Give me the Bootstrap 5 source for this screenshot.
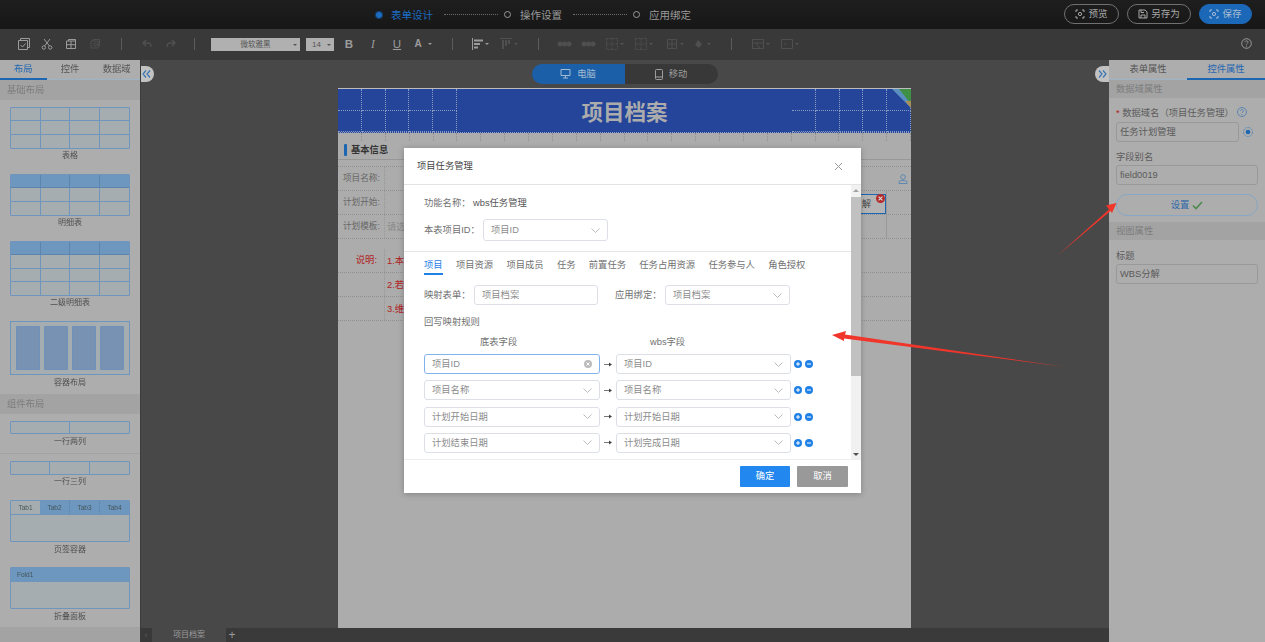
<!DOCTYPE html>
<html lang="zh-CN">
<head>
<meta charset="UTF-8">
<title>项目档案 - 表单设计</title>
<link href="https://cdn.jsdelivr.net/npm/bootstrap@5.3.0/dist/css/bootstrap.min.css" rel="stylesheet">
<style>
html, body { margin: 0; height: 100%; background: #484848; }
body { font-family: "Liberation Sans", "Noto Sans CJK SC", sans-serif; font-size: 9.3px; line-height: 14px; }
.stage { width: 1265px; height: 642px; overflow: hidden; position: relative; display: flex; flex-direction: column; filter: blur(.45px); }

/* top steps */
.topbar { height: 29px; flex: none; background: linear-gradient(#1e1e1e, #171717); color: #9a9a9a; font-size: 10.5px; position: relative; }
.step-wrap { position: absolute; left: 374px; top: 0; height: 29px; display: flex; align-items: center; }
.step-dot { width: 7px; height: 7px; border: 1px solid #9a9a9a; border-radius: 50%; }
.step-now { background: #1d6cc0; border-color: #1d6cc0; box-shadow: 0 0 0 1px #123f70; width: 6px; height: 6px; margin-left: 2px; }
.step-txt { margin-left: 9px; width: 42px; white-space: nowrap; }
.step-now + .step-txt { color: #1d6cc0; margin-left: 9px; }
.step-line { width: 54px; border-top: 1px dotted #6b6b6b; margin: 0 6px 0 11px; }
.top-btns { position: absolute; right: 13px; top: 4px; display: flex; gap: 8px; }
.tbtn { height: 20px; padding: 0; font-size: 9.5px; line-height: 18px; color: #a8a8a8; border: 1px solid #707070; background: transparent; display: flex; align-items: center; justify-content: center; gap: 3px; }
.tbtn-blue { background: #1c68b8; border-color: #1c68b8; color: #a9bcd0; }

/* toolbar */
.toolrow { height: 31px; flex: none; background: #393939; position: relative; }
.tic { position: absolute; top: 9px; width: 12px; height: 12px; display: block; }
.tsep { position: absolute; top: 9px; width: 1px; height: 12px; background: #5c5c5c; }
.fsel { position: absolute; top: 9px; height: 13px; background: #b0b0b0; color: #555; font-size: 7.5px; line-height: 13px; text-align: center; }
.fsel::after { content: ""; position: absolute; right: 3px; top: 6px; border: 2px solid transparent; border-top-color: #555; }
.tltr { position: absolute; top: 8px; color: #9c9c9c; font-size: 11.5px; line-height: 14px; width: 12px; text-align: center; }
.caret-s { position: absolute; top: 14px; border: 2px solid transparent; border-top-color: #9c9c9c; }
.caret-d { border-top-color: #555; }

.mainrow { flex: 1; display: flex; min-height: 0; }

/* left palette */
.palette { width: 140px; flex: none; background: #adadad; box-shadow: 1px 0 0 #3c3c3c; position: relative; z-index: 1; display: flex; flex-direction: column; color: #5a5a5a; }
.ptabs { height: 20px; display: flex; flex: none; border-bottom: 1px solid #9db3c9; color: #555; }
.ptabs div { flex: 1; text-align: center; line-height: 18px; }
.ptabs .on { color: #1d66b2; border-bottom: 2px solid #1d66b2; height: 20px; }
.psec { height: 20px; background: #a3a3a3; color: #7c7c7c; padding-left: 7px; line-height: 20px; flex: none; }
.lay-item { padding: 0 10px 11px; }
.lay-name { font-size: 8px; line-height: 14px; text-align: center; color: #4f4f4f; margin-top: 1px; }
.thumb { border: 1px solid #6f95bd; border-radius: 1px; background: #a6adb0; display: grid; overflow: hidden; }
.thumb > div { border-right: 1px solid #6f95bd; border-bottom: 1px solid #6f95bd; min-width: 0; }
.thumb .hd { background: #6e97c0; border-right-color: #5d84ac; border-bottom-color: #5d84ac; }
.thumb .col-end { border-right: 0; }
.thumb .row-end { border-bottom: 0; }
.box-thumb { height: 54px; border: 1px solid #6f95bd; background: #a6adb0; display: flex; gap: 4px; padding: 4px 5px; }
.box-thumb div { flex: 1; background: #7892b3; border: 1px solid #7090b8; border-radius: 1px; }
.tab-thumb { height: 42px; border: 1px solid #6f95bd; border-radius: 1px; background: #a6adb0; }
.tab-head { display: flex; height: 14px; background: #6e97c0; border-bottom: 1px solid #6f95bd; font-size: 6.5px; line-height: 13px; color: #455; text-align: center; }
.tab-head div { flex: 1; border-right: 1px dotted #5e7fa2; }
.tab-head .sel { background: #a6adb0; border-right: 0; }
.tab-head .fold { text-align: left; padding-left: 6px; border: 0; }
.p-foot { flex: 1; background: #a3a3a3; }
.p-rule { border-top: 1px solid #a3a3a3; padding-top: 7px; }

/* centre */
.canvas-col { flex: 1; min-width: 0; position: relative; display: flex; flex-direction: column; background: #484848; }
.canvas-area { flex: 1; min-height: 0; display: flex; flex-direction: column; align-items: center; }
.device { margin-top: 4px; height: 20px; width: 186px; display: flex; border-radius: 10px; overflow: hidden; flex: none; color: #9e9e9e; }
.device div { flex: 1; display: flex; align-items: center; justify-content: center; gap: 6px; background: #383838; }
.device .on { background: #1a5fa8; color: #a5bbd2; }
.sheet { margin-top: 4px; width: 573px; flex: 1; background: #acacac; border-top: 1px solid #bcbcbc; position: relative; color: #666; }
.band { height: 44px; background: #24459a; display: flex; border-bottom: 1px dotted #8a9bc4; }
.band-grid { width: 119px; display: grid; grid-template-columns: repeat(5, 1fr); grid-template-rows: 1fr 1fr; flex: none; }
.band-grid div { border-right: 1px dotted #8a9bc4; border-bottom: 1px dotted #8a9bc4; }
.band-title { flex: 1; text-align: center; color: #acacac; font-size: 21.5px; font-weight: 700; line-height: 48px; }
.corner { position: absolute; right: 0; top: 0; display: block; }
.strip { height: 8px; display: grid; grid-template-columns: repeat(24, 1fr); }
.strip div { border-right: 1px dotted #8f8f8f; }
.info-row { height: 19px; display: flex; align-items: center; padding-left: 6px; gap: 4px; border-bottom: 1px solid #979797; font-weight: 700; color: #333; }
.info-bar { width: 3px; height: 12px; background: #1d66b2; border-radius: 1px; }
.gap-row { height: 7px; border-bottom: 1px dotted #8f8f8f; }
.s-row { height: 24px; border-bottom: 1px dotted #8f8f8f; display: flex; align-items: center; position: relative; }
.s-lab { width: 47px; padding-left: 5px; height: 100%; line-height: 23px; border-right: 1px dotted #979797; flex: none; font-size: 8.6px; }
.s-ph { padding-left: 2px; color: #888; }
.s-red { color: #b01f1f; }
.s-lab-red { text-align: right; padding-right: 7px; color: #b01f1f; font-size: 9.3px; }
.blue-inp { position: absolute; left: 400px; right: 25px; top: 3px; height: 20px; border: 1px solid #1d66b2; background: #b4b4b4; color: #444; line-height: 18px; text-align: right; padding-right: 14px; }
.red-x { position: absolute; right: 0; top: -1px; width: 9px; height: 9px; display: block; }
.person { position: absolute; right: 3px; top: 7px; display: block; }
.s-cellr { position: absolute; right: 24px; top: 0; bottom: 0; border-right: 1px solid #999; }
.tabbar { height: 14px; flex: none; background: #3a3a3a; display: flex; color: #9c9c9c; line-height: 14px; }
.tab-prev { width: 12px; background: #393939; text-align: center; color: #5c5c5c; }
.tab-cur { width: 74px; background: #484848; text-align: center; font-size: 8px; }
.tab-add { width: 12px; text-align: center; font-size: 12px; background: #393939; }

.handle { position: absolute; top: 66px; width: 14px; height: 16px; background: #c2c2c2; display: flex; align-items: center; justify-content: center; }
.handle-l { left: 140px; border-radius: 0 8px 8px 0; padding-right: 1px; }
.handle-r { left: 1095px; border-radius: 8px 0 0 8px; padding-left: 1px; }

/* right props */
.props { width: 156px; flex: none; background: #adadad; color: #5a5a5a; display: flex; flex-direction: column; position: relative; }
.props .ptabs div { line-height: 18px; }
.r-sec { height: 18px; background: #a3a3a3; color: #7c7c7c; line-height: 18px; padding-left: 7px; }
.r-lab { line-height: 14px; padding-left: 7px; color: #5c5c5c; }
.r-inp { height: 20px; margin-left: 7px; border: 1px solid #999; border-radius: 3px; padding: 0 3px; line-height: 18px; background: #adadad; color: #5a5a5a; }
.r-hint { width: 10px; height: 10px; display: inline-block; vertical-align: -1px; margin-left: 3px; }
.set-btn { height: 22px; margin: 9px 7px 6px; padding: 0; border: 1px solid #88a6c6; background: transparent; color: #2f6aa8; font-size: 9.3px; line-height: 20px; display: flex; align-items: center; justify-content: center; gap: 3px; }

/* dialog */
.dlg { position: absolute; left: 404px; top: 148px; width: 457px; height: 345px; border: 0; border-radius: 0; background: #fff; color: #666; display: flex; flex-direction: column; box-shadow: 0 1px 6px rgba(0,0,0,.25); }
.dlg-head { height: 37px; flex: none; padding: 0 18px 0 13px; border-bottom: 1px solid #e3e3e3; border-radius: 0; color: #444; display: flex; align-items: center; justify-content: space-between; }
.dlg-body { height: 274px; flex: none; padding: 0; display: flex; overflow: hidden; }
.dlg-main { flex: 1; min-width: 0; }
.dlg-pad { padding-left: 20px; }
.dlg-bar { width: 10px; flex: none; background: #f1f1f1; position: relative; }
.bar-thumb { position: absolute; left: 0; right: 0; top: 12px; height: 179px; background: #c1c1c1; }
.bar-up, .bar-dn { position: absolute; left: 2px; border: 3px solid transparent; }
.bar-up { top: 1px; border-bottom-color: #a3a3a3; }
.bar-dn { bottom: 0; border-top-color: #505050; }
.dlg-foot { height: 34px; flex: none; padding: 0 13px 0 0; border-top: 1px solid #eee; border-radius: 0; display: flex; align-items: center; justify-content: flex-end; gap: 7px; }
.dbtn { height: 21px; padding: 0; border: 0; border-radius: 1px; color: #fff; font-size: 9.3px; line-height: 21px; }
.dbtn-ok { background: #2287ee; width: 50px; }
.dbtn-no { background: #999; width: 51px; }
.d-row { display: flex; align-items: center; }
.d-lab { color: #707070; flex: none; white-space: nowrap; }
.fld { height: 20px; border: 1px solid #dcdfe6; border-radius: 3px; padding: 0 7px; color: #8c8c8c; display: flex; align-items: center; justify-content: space-between; white-space: nowrap; flex: none; }
.fld-on { border-color: #7fb5ec; }
.chev { display: block; flex: none; }
.dlg-rule { height: 1px; background: #e6e6e6; margin-top: 10px; }
.d-tabs { display: flex; margin-top: 6px; height: 17px; color: #707070; gap: 13.3px; }
.d-tabs div { line-height: 15px; height: 17px; }
.d-tabs .on { color: #1f80e6; border-bottom: 2px solid #1f80e6; }
.map-row { display: flex; align-items: center; height: 20px; margin-top: 6.33px; }
.map-arrow { width: 16px; flex: none; display: flex; justify-content: center; }
.map-tools { display: flex; gap: 3px; margin-left: 3px; }
.over-svg { position: absolute; left: 0; top: 0; pointer-events: none; }
</style>
</head>
<body>
<div class="stage">

  <div class="topbar">
    <div class="step-wrap">
      <div class="step-dot step-now"></div><div class="step-txt">表单设计</div><div class="step-line"></div>
      <div class="step-dot"></div><div class="step-txt">操作设置</div><div class="step-line"></div>
      <div class="step-dot"></div><div class="step-txt">应用绑定</div>
    </div>
    <div class="top-btns">
      <button class="btn tbtn rounded-pill" style="width:55px"><svg width="10" height="10" viewBox="0 0 10 10" fill="none" stroke="#a8a8a8"><path d="M1 3V1h2M7 1h2v2M9 7v2H7M3 9H1V7"/><circle cx="5" cy="5" r="1.6"/></svg>预览</button>
      <button class="btn tbtn rounded-pill" style="width:64px"><svg width="10" height="10" viewBox="0 0 10 10" fill="none" stroke="#a8a8a8"><path d="M1 1h6l2 2v6H1z"/><path d="M3 1v2.500h3M3 9V6h4v3"/></svg>另存为</button>
      <button class="btn tbtn tbtn-blue rounded-pill" style="width:53px"><svg width="10" height="10" viewBox="0 0 10 10" fill="none" stroke="#a9bcd0"><path d="M1 3V1h2M7 1h2v2M9 7v2H7M3 9H1V7"/><circle cx="5" cy="5" r="1.6"/></svg>保存</button>
    </div>
  </div>

  <div class="toolrow">
    <svg class="tic" style="left:18px" viewBox="0 0 12 12" fill="none" stroke="#9c9c9c"><path d="M.5 2.500h9v9h-9zM2.500 2.500v-2h9v9h-2"/><path d="M2.500 7l2 2 3-3.500"/></svg>
    <svg class="tic" style="left:41px" viewBox="0 0 12 12" fill="none" stroke="#9c9c9c"><path d="M3 1l5.500 7M9 1L3.500 8"/><circle cx="2.800" cy="9.500" r="1.700"/><circle cx="9.200" cy="9.500" r="1.700"/></svg>
    <svg class="tic" style="left:65px" viewBox="0 0 12 12" fill="none" stroke="#9c9c9c"><path d="M1.500 3h9v7.500h-9zM3.500 3V1.500h7V3M6 3v7.500M1.500 6.700h9"/></svg>
    <svg class="tic" style="left:89px" viewBox="0 0 12 12" fill="none" stroke="#4f4f4f"><path d="M2 3h7v7H2zM4 3V1.500h6.500V8H9"/><circle cx="6" cy="6.500" r="1.500"/></svg>
    <div class="tsep" style="left:121px"></div>
    <svg class="tic" style="left:141px" viewBox="0 0 12 12" fill="none" stroke="#4f4f4f" stroke-width="1.500"><path d="M5 2L2 5l3 3M2 5h5c2 0 3 1.500 3 4"/></svg>
    <svg class="tic" style="left:165px" viewBox="0 0 12 12" fill="none" stroke="#4f4f4f" stroke-width="1.500"><path d="M7 2l3 3-3 3M10 5H5C3 5 2 6.500 2 9"/></svg>
    <div class="tsep" style="left:194px"></div>
    <div class="fsel" style="left:211px;width:89px">微软雅黑</div>
    <div class="fsel" style="left:306px;width:28px;text-align:left;padding-left:6px;font-size:8px">14</div>
    <div class="tltr" style="left:343px;font-weight:700">B</div>
    <div class="tltr" style="left:367px;font-style:italic;font-family:'Liberation Serif',serif">I</div>
    <div class="tltr" style="left:391px;text-decoration:underline">U</div>
    <div class="tltr" style="left:412px;font-weight:700;font-size:10px">A</div>
    <div class="caret-s" style="left:428px"></div>
    <div class="tsep" style="left:452px"></div>
    <svg class="tic" style="left:472px" viewBox="0 0 12 12" fill="#9c9c9c"><path d="M0 0h1v12H0zM2 1.500h9v2H2zM2 5h6v2H2zM2 8.500h4v2H2z"/></svg>
    <div class="caret-s" style="left:485px"></div>
    <svg class="tic" style="left:500px" viewBox="0 0 12 12" fill="#4f4f4f"><path d="M0 0h12v1H0zM2 2h2v9H2zM5 2h2v6H5zM8 2h2v4H8z"/></svg>
    <div class="caret-s caret-d" style="left:514px"></div>
    <div class="tsep" style="left:538px"></div>
    <svg class="tic" style="left:557px;width:15px" viewBox="0 0 15 12" fill="#4f4f4f"><circle cx="3" cy="6" r="2.500"/><circle cx="7.500" cy="6" r="2.500"/><circle cx="12" cy="6" r="2.500"/></svg>
    <svg class="tic" style="left:581px;width:15px" viewBox="0 0 15 12" fill="#4f4f4f"><circle cx="3" cy="6" r="2.500"/><circle cx="7.500" cy="6" r="2.500"/><circle cx="12" cy="6" r="2.500"/></svg>
    <svg class="tic" style="left:606px" viewBox="0 0 12 12" fill="none" stroke="#4f4f4f" stroke-dasharray="2 1"><path d="M.5.500h11v11H.5zM6 .5v11M.5 6h11"/></svg>
    <div class="caret-s caret-d" style="left:620px"></div>
    <svg class="tic" style="left:635px" viewBox="0 0 12 12" fill="none" stroke="#4f4f4f" stroke-dasharray="2 1"><path d="M.5.500h11v11H.5zM6 .5v11M.5 6h11"/></svg>
    <div class="caret-s caret-d" style="left:649px"></div>
    <svg class="tic" style="left:666px" viewBox="0 0 12 12" fill="none" stroke="#4f4f4f"><path d="M.5.500h9v9h-9zM5 .5v9M.5 5h9" transform="translate(1 1)"/></svg>
    <div class="caret-s caret-d" style="left:680px"></div>
    <svg class="tic" style="left:692px" viewBox="0 0 12 12" fill="#4f4f4f"><path d="M6 2l4 4-3 4-4-3z"/></svg>
    <div class="caret-s caret-d" style="left:707px"></div>
    <div class="tsep" style="left:731px"></div>
    <svg class="tic" style="left:752px" viewBox="0 0 12 12" fill="none" stroke="#4f4f4f"><path d="M.5 1.500h11v9H.5zM.5 5h11M4 5l4 5.500"/></svg>
    <div class="caret-s caret-d" style="left:766px"></div>
    <svg class="tic" style="left:781px" viewBox="0 0 12 12" fill="none" stroke="#4f4f4f"><path d="M.5 1.500h11v9H.5zM4 5v2"/></svg>
    <div class="caret-s caret-d" style="left:795px"></div>
    <svg class="tic" style="left:1241px;width:11px;height:11px" viewBox="0 0 11 11" fill="none" stroke="#9c9c9c"><circle cx="5.500" cy="5.500" r="4.800"/><path d="M4 4.300c0-2 3-2 3 0 0 1-1.500 1.200-1.500 2.300M5.500 7.600v1"/></svg>
  </div>

  <div class="mainrow">
    <div class="palette">
      <div class="ptabs"><div class="on">布局</div><div>控件</div><div>数据域</div></div>
      <div class="psec">基础布局</div>
      <div class="lay-item" style="padding-top:7px">
        <div class="thumb" data-rows="3" data-cols="4" style="height:42px"></div>
        <div class="lay-name" style="margin-top:0">表格</div>
      </div>
      <div class="lay-item">
        <div class="thumb" data-rows="3" data-cols="4" data-head="1" style="height:42px"></div>
        <div class="lay-name" style="margin-top:0">明细表</div>
      </div>
      <div class="lay-item">
        <div class="thumb" data-rows="4" data-cols="4" data-head="1" style="height:55px"></div>
        <div class="lay-name" style="margin-top:0">二级明细表</div>
      </div>
      <div class="lay-item" style="padding-bottom:4px">
        <div class="box-thumb"><div></div><div></div><div></div><div></div></div>
        <div class="lay-name">容器布局</div>
      </div>
      <div class="psec">组件布局</div>
      <div class="lay-item" style="padding-top:7px;padding-bottom:4px">
        <div class="thumb" data-rows="1" data-cols="2" style="height:13px"></div>
        <div class="lay-name">一行两列</div>
      </div>
      <div class="lay-item p-rule">
        <div class="thumb" data-rows="1" data-cols="3" style="height:14px"></div>
        <div class="lay-name" style="margin-top:0">一行三列</div>
      </div>
      <div class="lay-item" style="padding-bottom:10px">
        <div class="tab-thumb"><div class="tab-head"><div class="sel">Tab1</div><div>Tab2</div><div>Tab3</div><div class="border-0">Tab4</div></div></div>
        <div class="lay-name">页签容器</div>
      </div>
      <div class="lay-item" style="padding-bottom:3px">
        <div class="tab-thumb"><div class="tab-head"><div class="fold">Fold1</div></div></div>
        <div class="lay-name">折叠面板</div>
      </div>
      <div class="p-foot"></div>
    </div>

    <div class="canvas-col">
      <div class="canvas-area">
        <div class="device">
          <div class="on"><svg width="11" height="10" viewBox="0 0 11 10" fill="none" stroke="#a5bbd2"><path d="M1 .5h9v6H1zM5.500 6.500v2.500M3 9h5"/></svg>电脑</div>
          <div><svg width="8" height="11" viewBox="0 0 8 11" fill="none" stroke="#9e9e9e"><rect x=".5" y=".5" width="7" height="10" rx="1"/><path d="M.5 8h7"/></svg>移动</div>
        </div>
        <div class="sheet">
          <div class="band">
            <div class="band-grid"><div></div><div></div><div></div><div></div><div></div><div></div><div></div><div></div><div></div><div></div></div>
            <div class="band-title">项目档案</div>
            <div class="band-grid"><div></div><div></div><div></div><div></div><div></div><div></div><div></div><div></div><div></div><div></div></div>
          </div>
          <svg class="corner" width="19" height="19" viewBox="0 0 19 19"><path d="M0 0h19v19z" fill="#5b8fc0"/><path d="M7 0h12v15z" fill="#3f8f45"/><path d="M13 12l6 7v-7z" fill="#a88f58"/></svg>
          <div class="strip" id="sheetStrip"></div>
          <div class="info-row"><span class="info-bar"></span>基本信息</div>
          <div class="gap-row"></div>
          <div class="s-row"><div class="s-lab">项目名称:</div>
            <svg class="person" width="10" height="10" viewBox="0 0 10 10" fill="none" stroke="#5d86b0"><circle cx="5" cy="3" r="2.300"/><path d="M1 9.500V8c0-1 1.500-1.500 4-1.500S9 7 9 8v1.500z"/></svg>
          </div>
          <div class="s-row"><div class="s-lab">计划开始:</div>
            <div class="s-cellr"></div>
            <div class="blue-inp">解
              <svg class="red-x" viewBox="0 0 8 8"><circle cx="4" cy="4" r="4" fill="#b32a2a"/><path d="M2.300 2.300l3.400 3.400M5.700 2.300L2.300 5.700" stroke="#ddd"/></svg>
            </div>
          </div>
          <div class="s-row"><div class="s-lab">计划模板:</div><div class="s-ph">请选</div><div class="s-cellr"></div></div>
          <div style="height:10px"></div>
          <div class="s-row"><div class="s-lab s-lab-red">说明:</div><div class="s-ph s-red">1.本</div></div>
          <div class="s-row"><div class="s-lab"></div><div class="s-ph s-red">2.若</div></div>
          <div class="s-row"><div class="s-lab"></div><div class="s-ph s-red">3.维</div></div>
        </div>
      </div>
      <div class="tabbar">
        <div class="tab-prev">‹</div>
        <div class="tab-cur">项目档案</div>
        <div class="tab-add">+</div>
      </div>
    </div>

    <div class="props">
      <div class="ptabs"><div>表单属性</div><div class="on">控件属性</div></div>
      <div class="r-sec">数据域属性</div>
      <div class="r-lab" style="margin-top:8px"><span class="s-red">*</span> 数据域名（项目任务管理）<svg class="r-hint" viewBox="0 0 10 10" fill="none" stroke="#5b86b4"><circle cx="5" cy="5" r="4.500"/><path d="M3.500 4c0-2 3-2 3 0 0 1-1.500 1-1.500 2M5 7v1"/></svg></div>
      <div class="d-flex align-items-center" style="margin-top:2px">
        <div class="r-inp" style="width:123px">任务计划管理</div>
        <svg class="ms-1" width="10" height="10" viewBox="0 0 10 10" fill="none"><circle cx="5" cy="5" r="4.500" stroke="#5b86b4" stroke-dasharray="2 1"/><circle cx="5" cy="5" r="2.300" fill="#1d66b2"/></svg>
      </div>
      <div class="r-lab" style="margin-top:8px">字段别名</div>
      <div class="r-inp" style="width:142px;margin-top:1px">field0019</div>
      <button class="btn set-btn rounded-pill">设置 <svg width="11" height="9" viewBox="0 0 11 9" fill="none" stroke="#4d8a4d" stroke-width="1.600"><path d="M1 4.500l3 3 6-6.500"/></svg></button>
      <div class="r-sec">视图属性</div>
      <div class="r-lab" style="margin-top:9px">标题</div>
      <div class="r-inp" style="width:142px;margin-top:1px">WBS分解</div>
    </div>
  </div>

  <div class="modal-content dlg">
    <div class="modal-header dlg-head">
      <span>项目任务管理</span>
      <svg width="9" height="9" viewBox="0 0 9 9" stroke="#999"><path d="M1 1l7 7M8 1L1 8"/></svg>
    </div>
    <div class="modal-body dlg-body">
      <div class="dlg-main">
        <div class="dlg-pad">
          <div class="d-row" style="margin-top:11px"><span class="d-lab" style="width:49px">功能名称：</span><span style="color:#555">wbs任务管理</span></div>
          <div class="d-row" style="margin-top:9px">
            <span class="d-lab" style="width:59px">本表项目ID：</span>
            <div class="fld" style="width:125px;height:22px"><span>项目ID</span><svg class="chev" width="9" height="5" viewBox="0 0 9 5" fill="none" stroke="#bbb"><path d="M.5.500l4 4 4-4"/></svg></div>
          </div>
        </div>
        <div class="dlg-rule"></div>
        <div class="dlg-pad">
          <div class="d-tabs"><div class="on">项目</div><div>项目资源</div><div>项目成员</div><div>任务</div><div>前置任务</div><div>任务占用资源</div><div>任务参与人</div><div>角色授权</div></div>
          <div class="d-row" style="margin-top:10px">
            <span class="d-lab" style="width:50px">映射表单：</span>
            <div class="fld" style="width:124px"><span>项目档案</span></div>
            <span class="d-lab" style="margin-left:17px;width:50px">应用绑定：</span>
            <div class="fld" style="width:125px"><span>项目档案</span><svg class="chev" width="9" height="5" viewBox="0 0 9 5" fill="none" stroke="#bbb"><path d="M.5.500l4 4 4-4"/></svg></div>
          </div>
          <div class="d-lab" style="margin-top:10px">回写映射规则</div>
          <div class="d-row d-lab" style="margin-top:6px"><span style="margin-left:56px;width:170px">底表字段</span><span>wbs字段</span></div>
          <div id="mapRows" style="margin-top:-1.330px"></div>
        </div>
      </div>
      <div class="dlg-bar"><div class="bar-up"></div><div class="bar-thumb"></div><div class="bar-dn"></div></div>
    </div>
    <div class="modal-footer dlg-foot">
      <button class="btn dbtn dbtn-ok m-0">确定</button>
      <button class="btn dbtn dbtn-no m-0">取消</button>
    </div>
  </div>

  <div class="handle handle-l"><svg width="9" height="8" viewBox="0 0 9 8" fill="none" stroke="#3a76b4" stroke-width="1.200"><path d="M4 .5L1 4l3 3.500M8 .5L5 4l3 3.500"/></svg></div>
  <div class="handle handle-r"><svg width="9" height="8" viewBox="0 0 9 8" fill="none" stroke="#3a76b4" stroke-width="1.200"><path d="M1 .5L4 4 1 7.500M5 .5L8 4 5 7.500"/></svg></div>

  <svg class="over-svg" width="1265" height="642" viewBox="0 0 1265 642">
    <path d="M1057 256L1109 209.500l-3-4 10.500-2.500-4.500 10-1.500-2z" fill="#f0352b"/>
    <path d="M832 335l14-4-1 3.500L1066 367 844 338.500l0 2.500z" fill="#f0352b"/>
  </svg>
</div>

<script>
// 缩略表格单元格
document.querySelectorAll('.thumb').forEach(el => {
    const rows = +el.dataset.rows, cols = +el.dataset.cols, head = el.dataset.head;
    el.style.gridTemplateColumns = `repeat(${cols}, 1fr)`;
    el.style.gridTemplateRows = `repeat(${rows}, 1fr)`;
    for (let r = 0; r < rows; r++) {
        for (let c = 0; c < cols; c++) {
            const d = document.createElement('div');
            if (head && r === 0) d.classList.add('hd');
            if (c === cols - 1) d.classList.add('col-end');
            if (r === rows - 1) d.classList.add('row-end');
            el.appendChild(d);
        }
    }
});

const strip = document.getElementById('sheetStrip');
for (let i = 0; i < 24; i++) strip.appendChild(document.createElement('div'));

// 回写映射规则
const chev = '<svg class="chev" width="9" height="5" viewBox="0 0 9 5" fill="none" stroke="#bbb"><path d="M.5.500l4 4 4-4"/></svg>';
const clear = '<svg class="chev" width="8" height="8" viewBox="0 0 8 8"><circle cx="4" cy="4" r="4" fill="#bbb"/><path d="M2.500 2.500l3 3M5.500 2.500l-3 3" stroke="#fff"/></svg>';
const arrow = '<svg width="8" height="5" viewBox="0 0 8 5"><path d="M0 2.500h5" stroke="#777"/><path d="M5 .5l3 2-3 2z" fill="#444"/></svg>';
const plus = '<svg width="8" height="8" viewBox="0 0 8 8"><circle cx="4" cy="4" r="4" fill="#1f80e6"/><path d="M2 4h4M4 2v4" stroke="#fff"/></svg>';
const minus = '<svg width="8" height="8" viewBox="0 0 8 8"><circle cx="4" cy="4" r="4" fill="#1f80e6"/><path d="M2 4h4" stroke="#fff"/></svg>';
[['项目ID', '项目ID'], ['项目名称', '项目名称'], ['计划开始日期', '计划开始日期'], ['计划结束日期', '计划完成日期']].forEach((m, i) => {
    const row = document.createElement('div');
    row.className = 'map-row';
    row.innerHTML = `
        <div class="fld ${i === 0 ? 'fld-on' : ''}" style="width:176px"><span>${m[0]}</span>${i === 0 ? clear : chev}</div>
        <div class="map-arrow">${arrow}</div>
        <div class="fld" style="width:175px"><span>${m[1]}</span>${chev}</div>
        <div class="map-tools">${plus}${minus}</div>`;
    document.getElementById('mapRows').appendChild(row);
});
</script>
<script src="https://cdn.jsdelivr.net/npm/bootstrap@5.3.0/dist/js/bootstrap.bundle.min.js"></script>
</body>
</html>
